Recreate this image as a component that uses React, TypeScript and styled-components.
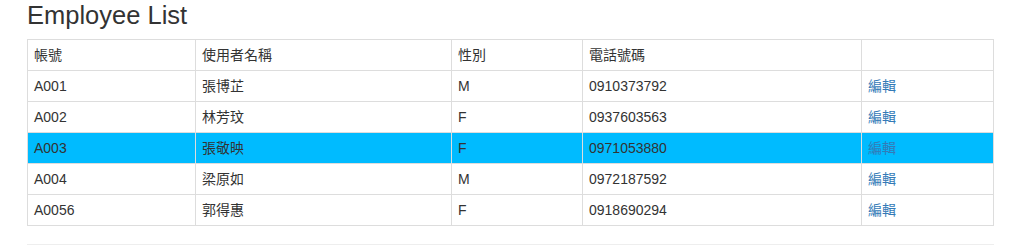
import React from "react";
import styled, { createGlobalStyle } from "styled-components";

type Employee = {
  id: string;
  name: string;
  gender: "M" | "F";
  phone: string;
};

const employees: Employee[] = [
  { id: "A001", name: "張博芷", gender: "M", phone: "0910373792" },
  { id: "A002", name: "林芳玟", gender: "F", phone: "0937603563" },
  { id: "A003", name: "張敬映", gender: "F", phone: "0971053880" },
  { id: "A004", name: "梁原如", gender: "M", phone: "0972187592" },
  { id: "A0056", name: "郭得惠", gender: "F", phone: "0918690294" },
];

const selectedId = "A003";

const GlobalStyle = createGlobalStyle`
  html, body {
    margin: 0;
    padding: 0;
    background: #fff;
  }
  body {
    font-family: "Liberation Sans", Arial, "Noto Sans CJK TC", sans-serif;
    font-size: 14px;
    line-height: 20px;
    color: #333;
  }
`;

const Page = styled.div`
  padding: 1px 0 0 27px;
  width: 967px;
`;

const Title = styled.h3`
  margin: 0 0 10px;
  font-size: 25.5px;
  font-weight: 500;
  line-height: 28px;
  color: #333;
`;

const Table = styled.table`
  width: 100%;
  table-layout: fixed;
  border-collapse: collapse;
  border: 1px solid #ddd;
`;

const HeadCell = styled.th`
  padding: 5px 5px 5px 6px;
  border: 1px solid #ddd;
  text-align: left;
  font-weight: normal;
  line-height: 20px;
`;

const Row = styled.tr<{ $selected?: boolean }>`
  background: ${(p) => (p.$selected ? "#00bbff" : "transparent")};
`;

const Cell = styled.td`
  padding: 5px 5px 5px 6px;
  border: 1px solid #ddd;
  line-height: 20px;
  vertical-align: top;
`;

const EditLink = styled.a`
  color: #337ab7;
  text-decoration: none;
  cursor: pointer;
`;

const Divider = styled.hr`
  margin: 18px 0 0;
  border: 0;
  border-top: 1px solid #eee;
`;

export default function App() {
  return (
    <>
      <GlobalStyle />
      <Page>
        <Title>Employee List</Title>
        <Table>
          <colgroup>
            <col style={{ width: 168 }} />
            <col style={{ width: 256 }} />
            <col style={{ width: 131 }} />
            <col style={{ width: 279 }} />
            <col />
          </colgroup>
          <thead>
            <tr>
              <HeadCell>帳號</HeadCell>
              <HeadCell>使用者名稱</HeadCell>
              <HeadCell>性別</HeadCell>
              <HeadCell>電話號碼</HeadCell>
              <HeadCell />
            </tr>
          </thead>
          <tbody>
            {employees.map((e) => (
              <Row key={e.id} $selected={e.id === selectedId}>
                <Cell>{e.id}</Cell>
                <Cell>{e.name}</Cell>
                <Cell>{e.gender}</Cell>
                <Cell>{e.phone}</Cell>
                <Cell>
                  <EditLink>編輯</EditLink>
                </Cell>
              </Row>
            ))}
          </tbody>
        </Table>
        <Divider />
      </Page>
    </>
  );
}
